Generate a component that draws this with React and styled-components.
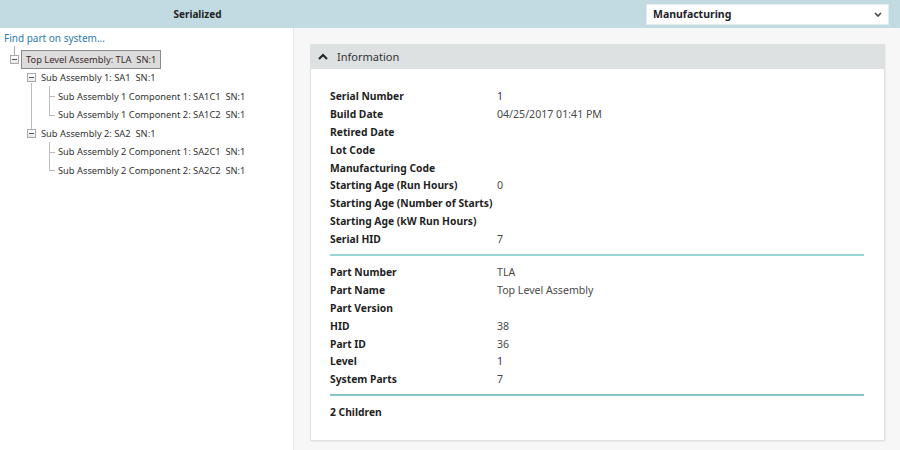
import React from "react";
import styled, { createGlobalStyle } from "styled-components";

const GlobalStyle = createGlobalStyle`
  html, body {
    margin: 0;
    padding: 0;
    width: 900px;
    height: 450px;
    overflow: hidden;
    font-family: "Noto Sans", "Open Sans", sans-serif;
    color: #222;
  }
`;

const Page = styled.div`
  display: flex;
  flex-direction: column;
  width: 900px;
  height: 450px;
`;

const Header = styled.div`
  display: flex;
  align-items: center;
  height: 28px;
  background-color: #c2dbe3;
  flex-shrink: 0;
`;

const HeaderTitle = styled.div`
  width: 395px;
  text-align: center;
  font-size: 10px;
  font-weight: bold;
  color: #222;
`;

const SelectBox = styled.div`
  margin-left: auto;
  margin-right: 11px;
  width: 243px;
  height: 21px;
  box-sizing: border-box;
  background: #fff;
  border: 1px solid #e2ecef;
  display: flex;
  align-items: center;
  padding: 0 6px;
  font-size: 10.5px;
  font-weight: bold;
  color: #1e1e2a;
`;

const SelectArrow = styled.svg`
  margin-left: auto;
  width: 8px;
  height: 5px;
`;

const Body = styled.div`
  display: flex;
  flex: 1;
  min-height: 0;
`;

const LeftPanel = styled.div`
  width: 293px;
  flex-shrink: 0;
  background: #fff;
  border-right: 1px solid #e6e6e6;
  padding-top: 3px;
  font-size: 9.3px;
  color: #333;
`;

const FindLink = styled.a`
  display: block;
  margin-left: 4px;
  font-size: 10px;
  color: #2b7bb0;
  line-height: 14px;
  text-decoration: none;
  cursor: pointer;
`;

const TreeList = styled.ul`
  list-style: none;
  margin: ${(p) => (p.$root ? "5px 0 0" : "0")};
  padding: 0;
`;

const Item = styled.li`
  position: relative;
`;

const Row = styled.div`
  position: relative;
  display: flex;
  align-items: center;
  height: 18.5px;
  padding-left: ${(p) => p.$indent}px;
`;

const Expander = styled.span`
  position: relative;
  width: 9px;
  height: 9px;
  box-sizing: border-box;
  border: 1px solid #a9a9a9;
  background: linear-gradient(#fff, #e8e8e8);
  margin-right: ${(p) => p.$gap}px;
  flex-shrink: 0;
  &::after {
    content: "";
    position: absolute;
    left: 1px;
    top: 3px;
    width: 5px;
    height: 1px;
    background: #555;
  }
`;

const RootStem = styled.span`
  position: absolute;
  left: 14px;
  top: -4px;
  height: 9px;
  border-left: 1px solid #a9a9a9;
`;

const SiblingLine = styled.span`
  position: absolute;
  left: ${(p) => p.$left}px;
  top: 14px;
  bottom: -5px;
  border-left: 1px solid #bdbdbd;
`;

const Selected = styled.span`
  display: inline-block;
  padding: 2px 4px;
  background: #dcdcdc;
  border: 1px solid #8a8a8a;
  color: #3a2a2a;
  line-height: 13px;
  white-space: pre;
`;

const Label = styled.span`
  white-space: pre;
`;

const LeafList = styled.ul`
  list-style: none;
  margin: 0 0 0 49px;
  padding: 0;
`;

const Leaf = styled.li`
  position: relative;
  height: 18.5px;
  display: flex;
  align-items: center;
  padding-left: 9px;
  white-space: pre;
  &::before {
    content: "";
    position: absolute;
    left: 0;
    top: -1px;
    height: ${(p) => (p.$last ? "calc(50% + 1px)" : "calc(100% + 1px)")};
    border-left: 1px solid #bdbdbd;
  }
  &::after {
    content: "";
    position: absolute;
    left: 0;
    top: 50%;
    width: 6px;
    border-top: 1px solid #bdbdbd;
  }
`;

const RightPanel = styled.div`
  flex: 1;
  background: #f7f7f7;
  padding: 16px 15px 0 16px;
`;

const Card = styled.div`
  background: #fff;
  border: 1px solid #e0e0e0;
  border-top: none;
  box-shadow: 1px 1px 1px rgba(0, 0, 0, 0.04);
`;

const CardHeader = styled.div`
  display: flex;
  align-items: center;
  height: 25px;
  background: #dde1e1;
  padding-left: 8px;
  font-size: 11px;
  color: #333;
  margin: 0 -1px;
`;

const Chevron = styled.svg`
  width: 10px;
  height: 7px;
  margin-right: 9px;
`;

const CardBody = styled.div`
  padding: 18px 20px 19px 19px;
`;

const InfoRow = styled.div`
  display: grid;
  grid-template-columns: 167px 1fr;
  align-items: center;
  height: 17.9px;
  white-space: nowrap;
`;

const Key = styled.span`
  font-size: 10.3px;
  font-weight: bold;
  color: #1f1f1f;
`;

const Value = styled.span`
  font-size: 10.6px;
  color: ${(p) => (p.$accent ? "#452a6e" : "#4a4a4a")};
`;

const Divider = styled.div`
  height: 2px;
  background: ${(p) => p.$color};
  margin: 6px 0 7px;
`;

const Footer = styled.div`
  font-size: 10.3px;
  font-weight: bold;
  color: #1f1f1f;
  height: 18px;
  display: flex;
  align-items: center;
`;

const serialRows = [
  ["Serial Number", "1", true],
  ["Build Date", "04/25/2017 01:41 PM"],
  ["Retired Date", ""],
  ["Lot Code", ""],
  ["Manufacturing Code", ""],
  ["Starting Age (Run Hours)", "0"],
  ["Starting Age (Number of Starts)", ""],
  ["Starting Age (kW Run Hours)", ""],
  ["Serial HID", "7"],
];

const partRows = [
  ["Part Number", "TLA"],
  ["Part Name", "Top Level Assembly"],
  ["Part Version", ""],
  ["HID", "38"],
  ["Part ID", "36"],
  ["Level", "1", true],
  ["System Parts", "7"],
];

const subAssemblies = [
  { name: "Sub Assembly 1: SA1  SN:1", parts: ["Sub Assembly 1 Component 1: SA1C1  SN:1", "Sub Assembly 1 Component 2: SA1C2  SN:1"] },
  { name: "Sub Assembly 2: SA2  SN:1", parts: ["Sub Assembly 2 Component 1: SA2C1  SN:1", "Sub Assembly 2 Component 2: SA2C2  SN:1"] },
];

const InfoTable = ({ rows }) =>
  rows.map(([k, v, accent]) => (
    <InfoRow key={k}>
      <Key>{k}</Key>
      <Value $accent={accent}>{v}</Value>
    </InfoRow>
  ));

export default function App() {
  return (
    <Page>
      <GlobalStyle />
      <Header>
        <HeaderTitle>Serialized</HeaderTitle>
        <SelectBox>
          Manufacturing
          <SelectArrow viewBox="0 0 8 5">
            <path d="M1 1 L4 4 L7 1" fill="none" stroke="#444" strokeWidth="1.6" />
          </SelectArrow>
        </SelectBox>
      </Header>
      <Body>
        <LeftPanel>
          <FindLink>Find part on system...</FindLink>
          <TreeList $root>
            <Item>
              <Row $indent={10}>
                <RootStem />
                <Expander $gap={2} />
                <Selected>{"Top Level Assembly: TLA  SN:1"}</Selected>
              </Row>
              <TreeList>
                {subAssemblies.map((sa, i) => (
                  <Item key={sa.name}>
                    {i < subAssemblies.length - 1 && <SiblingLine $left={31} />}
                    <Row $indent={27}>
                      <Expander $gap={5} />
                      <Label>{sa.name}</Label>
                    </Row>
                    <LeafList>
                      {sa.parts.map((p, j) => (
                        <Leaf key={p} $last={j === sa.parts.length - 1}>
                          {p}
                        </Leaf>
                      ))}
                    </LeafList>
                  </Item>
                ))}
              </TreeList>
            </Item>
          </TreeList>
        </LeftPanel>
        <RightPanel>
          <Card>
            <CardHeader>
              <Chevron viewBox="0 0 10 7">
                <path d="M1 6 L5 2 L9 6" fill="none" stroke="#222" strokeWidth="2" />
              </Chevron>
              Information
            </CardHeader>
            <CardBody>
              <InfoTable rows={serialRows} />
              <Divider $color="#97d8d4" />
              <InfoTable rows={partRows} />
              <Divider $color="#83c6c4" />
              <Footer>2 Children</Footer>
            </CardBody>
          </Card>
        </RightPanel>
      </Body>
    </Page>
  );
}
